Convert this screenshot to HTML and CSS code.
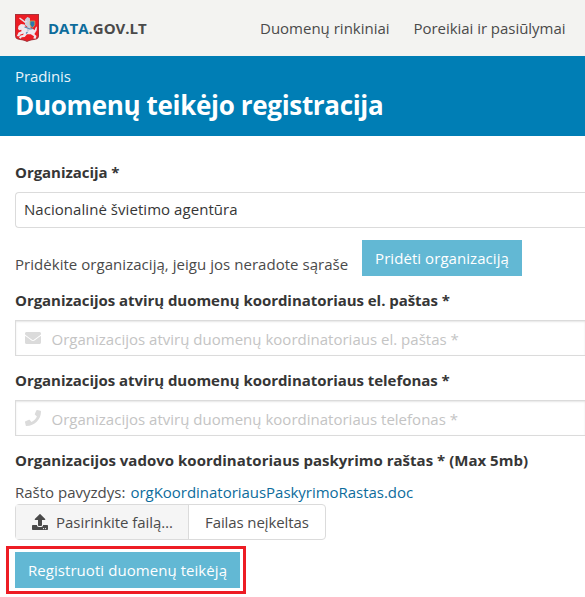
FILE: index.html
```html
<!DOCTYPE html>
<html lang="lt">
<head>
<meta charset="utf-8">
<title>Duomenų teikėjo registracija</title>
<link rel="stylesheet" href="styles.css">
</head>
<body>
<header class="navbar">
  <a class="brand">
    <svg class="crest" viewBox="0 0 24 28" width="24" height="28">
      <path d="M0 0h24v21.500c0 3-2 4-5 4.500-3 .4-5 .8-7 2-2-1.200-4-1.600-7-2-3-.5-5-1.500-5-4.500z" fill="#a8323a"/>
      <path d="M.8 1h22.400v20.300c0 2.500-2 3.300-4.500 3.700-3 .4-5 .9-6.700 2-1.700-1.100-3.700-1.600-6.700-2C2.800 24.600.8 23.800.8 21.300z" fill="#ec1c24"/>
      <path d="M3.500 12l2.500-2 3.500.5 1.500 3 4 .5 4 1.500 1.500 3-1.200 1.500 2.200 2-.8 2.700-2.400-.2.700-2.200-3.200-2-3.800 0-2.300 2.800-3 .2-1 1.500-1.800-1 1.500-2.200 2.600-.7.800-1.300-3.400 1-1.200 2-2.300-.7 1.600-3.300 3-1.400-.2-1.500-2.200.6-1.100-1.600z" fill="#eee8ee"/>
      <path d="M18 17c3-1 1.500-3.500 3.900-4.500-.2 2.600.3 5.800-3 6z" fill="#eee8ee"/>
      <path d="M10 5.500l2.300-2.400 2.500 1 .3 2.900 1.200 1-.7 6-2 3.500-1.800-.4.700-4-2.500-2z" fill="#c9cfdb"/>
      <path d="M4.500 4l5.500 4.200 2-1" fill="none" stroke="#e7dfe5" stroke-width="1.500"/>
      <path d="M15 7h4.800v3.500q-.4 2-2.400 3.200-2-1.200-2.400-3.200z" fill="#2b78ac" stroke="#d8b34e" stroke-width=".7"/>
      <path d="M9.500 13l5.500 2 2.500-.4M12.500 18l-1.500 1.500" fill="none" stroke="#568db7" stroke-width="1.200"/>
    </svg>
    <span class="brand-name"><span class="brand-data">DATA</span>.GOV.LT</span>
  </a>
  <nav class="menu"><a class="menu-sets">Duomenų rinkiniai</a><a class="menu-needs">Poreikiai ir pasiūlymai</a></nav>
</header>
<section class="hero">
  <div class="crumb">Pradinis</div>
  <h1>Duomenų teikėjo registracija</h1>
</section>
<main class="form">
  <label class="label label-org">Organizacija *</label>
  <div class="control select"><span class="org-value">Nacionalinė švietimo agentūra</span></div>
  <div class="add-row"><span class="add-text">Pridėkite organizaciją, jeigu jos neradote sąraše</span><a class="button button-add"><span>Pridėti organizaciją</span></a></div>
  <label class="label label-email">Organizacijos atvirų duomenų koordinatoriaus el. paštas *</label>
  <div class="control input">
    <svg class="icon" viewBox="0 0 512 512" width="16" height="16"><path fill="#dbdbdb" d="M502.300 190.800c3.900-3.100 9.700-.2 9.700 4.700V400c0 26.500-21.500 48-48 48H48c-26.500 0-48-21.500-48-48V195.600c0-5 5.700-7.800 9.700-4.700 22.400 17.400 52.100 39.500 154.100 113.600 21.100 15.400 56.700 47.800 92.200 47.600 35.700.3 72-32.800 92.300-47.600 102-74.100 131.600-96.300 154-113.700zM256 320c23.200.4 56.600-29.200 73.400-41.400 132.700-96.300 142.800-104.700 173.400-128.700 5.800-4.500 9.200-11.500 9.200-18.900v-19c0-26.500-21.500-48-48-48H48c-26.500 0-48 21.500-48 48v19c0 7.400 3.400 14.300 9.200 18.900 30.600 23.900 40.700 32.400 173.400 128.700 16.800 12.200 50.200 41.800 73.400 41.400z"/></svg>
    <span class="hint">Organizacijos atvirų duomenų koordinatoriaus el. paštas *</span>
  </div>
  <label class="label label-phone">Organizacijos atvirų duomenų koordinatoriaus telefonas *</label>
  <div class="control input">
    <svg class="icon" viewBox="0 0 512 512" width="16" height="16"><path fill="#dbdbdb" d="M493.400 24.600l-104-24c-11.300-2.600-22.900 3.300-27.500 13.900l-48 112c-4.200 9.800-1.400 21.300 6.900 28l60.600 49.600c-36 76.700-98.900 140.500-177.200 177.200l-49.600-60.600c-6.800-8.300-18.200-11.100-28-6.900l-112 48C3.900 366.500-2 378.100.6 389.400l24 104C27.100 504.200 36.700 512 48 512c256.100 0 464-207.500 464-464 0-11.200-7.700-20.900-18.600-23.400z"/></svg>
    <span class="hint">Organizacijos atvirų duomenų koordinatoriaus telefonas *</span>
  </div>
  <label class="label label-file">Organizacijos vadovo koordinatoriaus paskyrimo raštas * (Max 5mb)</label>
  <div class="example"><span class="example-text">Rašto pavyzdys:</span><a class="example-link">orgKoordinatoriausPaskyrimoRastas.doc</a></div>
  <div class="file">
    <span class="file-cta">
      <svg class="icon-upload" viewBox="0 0 512 512" width="16" height="16"><path fill="#4a4a4a" d="M296 384h-80c-13.300 0-24-10.700-24-24V192h-87.700c-17.800 0-26.700-21.500-14.100-34.100L242.300 5.700c7.500-7.500 19.800-7.500 27.300 0l152.200 152.200c12.600 12.600 3.700 34.100-14.100 34.100H320v168c0 13.300-10.700 24-24 24zm216-8v112c0 13.300-10.700 24-24 24H24c-13.300 0-24-10.700-24-24V376c0-13.300 10.700-24 24-24h136v8c0 30.900 25.100 56 56 56h80c30.900 0 56-25.100 56-56v-8h136c13.300 0 24 10.700 24 24zm-124 88c0-11-9-20-20-20s-20 9-20 20 9 20 20 20 20-9 20-20zm64 0c0-11-9-20-20-20s-20 9-20 20 9 20 20 20 20-9 20-20z"/></svg>
      <span class="cta-text">Pasirinkite failą…</span>
    </span>
    <span class="file-name"><span class="file-text">Failas neįkeltas</span></span>
  </div>
  <div class="highlight"><a class="button button-submit"><span>Registruoti duomenų teikėją</span></a></div>
</main>
</body>
</html>
```
FILE: styles.css
```css
* { box-sizing: border-box; }
body {
  margin: 0;
  height: 597px;
  overflow: hidden;
  background: #fff;
  color: #4a4a4a;
  font: 15px/24px "Open Sans", "Noto Sans", sans-serif;
  white-space: nowrap;
}
.navbar {
  height: 56px;
  padding-left: 15px;
  display: flex;
  align-items: center;
  background: #f3f3f1;
}
.brand { display: flex; align-items: center; gap: 9px; width: 245px; }
.crest { flex: none; }
.brand-name { font-weight: 700; }
.brand-data { color: #0d6c9c; }
.menu { display: flex; }
.menu-sets { width: 153.500px; }
.menu-needs { letter-spacing: -.04px; }
.hero {
  height: 80px;
  padding: 8px 15px;
  background: #007eb5;
  color: #fff;
}
.crumb { color: #e8f4fa; letter-spacing: -.1px; }
h1 {
  margin: 0;
  font-size: 26px;
  line-height: 34px;
  font-weight: 700;
  letter-spacing: -.33px;
}
.form { padding: 24px 0 0 15px; }
.label {
  display: block;
  margin-bottom: 8px;
  color: #363636;
  font-weight: 700;
}
.label-org, .label-email, .label-phone { letter-spacing: -.045px; }
.label-file { letter-spacing: .015px; }
.control {
  height: 36px;
  margin-bottom: 12px;
  display: flex;
  align-items: center;
  border: 1px solid #dbdbdb;
  border-right: 0;
  color: #363636;
}
.select { border-radius: 4px 0 0 4px; padding: 0 0 2px 8px; }
.org-value { letter-spacing: .05px; }
.input {
  padding: 2px 0 0 9px;
  gap: 10.500px;
  color: #c4c4c4;
  box-shadow: inset 0 1px 2px rgba(10, 10, 10, .1);
}
.icon { flex: none; margin-top: -2px; }
.hint { letter-spacing: .01px; }
.add-row { display: flex; height: 36px; margin-bottom: 12px; }
.add-text { width: 347px; padding-top: 12px; letter-spacing: .04px; }
.button {
  height: 36px;
  display: flex;
  align-items: center;
  justify-content: center;
  background: #62b8d4;
  color: #fff;
}
.button-add { width: 160px; letter-spacing: .06px; }
.button-submit { width: 225px; letter-spacing: .06px; }
.example { display: flex; }
.example-text { width: 115.500px; }
.example-link { color: #0d6c9c; letter-spacing: -.03px; }
.file {
  width: 311px;
  height: 36px;
  display: flex;
  border: 1px solid #dbdbdb;
  border-radius: 4px;
}
.file-cta {
  width: 172px;
  display: flex;
  align-items: center;
  gap: 8px;
  padding-left: 16px;
  background: #f5f5f5;
}
.cta-text { letter-spacing: -.04px; }
.file-name {
  flex: 1;
  display: flex;
  align-items: center;
  border-left: 1px solid #dbdbdb;
  padding-left: 16px;
}
.file-text { letter-spacing: -.1px; }
.highlight {
  width: 240px;
  height: 48px;
  margin: 6px 0 0 -9px;
  padding: 3px 0 0 6px;
  border: 3px solid #ed1c24;
}
```
